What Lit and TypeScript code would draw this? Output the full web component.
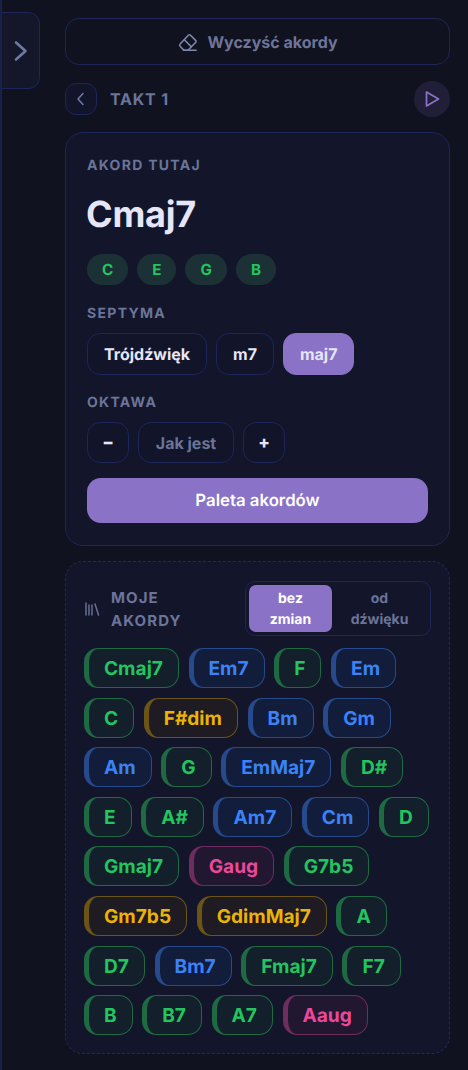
import { LitElement, html, css } from "lit";
import { customElement } from "lit/decorators.js";

type Kind = "g" | "b" | "y" | "p";
const rows: [string, Kind][] = [
  ["Cmaj7","g"],["Em7","b"],["F","g"],["Em","b"],
  ["C","g"],["F#dim","y"],["Bm","b"],["Gm","b"],
  ["Am","b"],["G","g"],["EmMaj7","b"],["D#","g"],
  ["E","g"],["A#","g"],["Am7","b"],["Cm","b"],["D","g"],
  ["Gmaj7","g"],["Gaug","p"],["G7b5","g"],
  ["Gm7b5","y"],["GdimMaj7","y"],["A","g"],
  ["D7","g"],["Bm7","b"],["Fmaj7","g"],["F7","g"],
  ["B","g"],["B7","g"],["A7","g"],["Aaug","p"],
];

@customElement("app-root")
export class AppRoot extends LitElement {
  static styles = css`
    :host { display: block; width: 468px; height: 1070px; overflow: hidden; background: #10121f; color: #e6e6f8;
      font-family: Inter, "Liberation Sans", sans-serif; border-left: 2px solid #1a1f48; box-sizing: border-box; text-rendering: geometricPrecision; }
    .layout { display: flex; align-items: flex-start; }
    .rail { width: 38px; height: 77px; margin-top: 12px; flex: none; box-sizing: border-box; background: #141729;
      border: 1px solid #1e2558; border-left: none; border-radius: 0 12px 12px 0; display: flex; align-items: center; justify-content: center; color: #6f7aa3; }
    .main { margin-left: 25px; width: 385px; padding-top: 18px; display: flex; flex-direction: column; }
    .clear { height: 47px; box-sizing: border-box; border: 1px solid #1e2558; border-radius: 14px; display: flex; align-items: center; justify-content: center; gap: 8px;
      color: #6f7599; font-size: 16px; font-weight: 700; }
    .clear svg { color: #7d86ac; }
    .takt { display: flex; align-items: center; height: 36px; margin-top: 16px; }
    .back { width: 32px; height: 32px; box-sizing: border-box; border: 1px solid #1e2558; border-radius: 11px; display: flex; align-items: center; justify-content: center; color: #6f7aa3; background: #12152a; }
    .takt-label { margin-left: 13px; font-size: 16px; font-weight: 700; letter-spacing: 0.8px; color: #6b7499; flex: 1; }
    .play { width: 36px; height: 36px; border-radius: 50%; background: #211f38; display: flex; align-items: center; justify-content: center; color: #8b72c8; }
    .card { margin-top: 15px; height: 414px; box-sizing: border-box; background: #13152a; border: 1px solid #1e2558; border-radius: 18px; padding: 24px 21px 0; display: flex; flex-direction: column; }
    .label { font-size: 14px; font-weight: 700; letter-spacing: 1.3px; color: #6b7499; line-height: 17px; }
    .name { font-size: 36px; font-weight: 700; line-height: 44px; margin: 18px 0 0 -1px; letter-spacing: -0.2px; }
    .notes { display: flex; gap: 9px; margin-top: 18px; }
    .note { height: 31px; padding: 0 15px; border-radius: 16px; background: #1c3136; color: #22c55e; font-size: 15.2px; font-weight: 700; display: flex; align-items: center; }
    .sep { margin-top: 20px; }
    .btns { display: flex; gap: 9px; margin-top: 11px; }
    .btn { height: 42px; box-sizing: border-box; padding: 0 16px; border: 1px solid #1e2558; border-radius: 13px; font-size: 16px; font-weight: 700; display: flex; align-items: center; justify-content: center; background: #12142a; }
    .btn.on { background: #8a72c6; border-color: #8a72c6; }
    .btn.sq { width: 42px; height: 41px; padding: 0; font-size: 17px; font-weight: 800; }
    .btn.mute { width: 96px; height: 41px; padding: 0; color: #6b7499; }
    .okt { margin-top: 19px; }
    .palette { height: 45px; margin-top: 15px; border-radius: 14px; background: #8a72c6; color: #fff; font-size: 16.8px; font-weight: 600; display: flex; align-items: center; justify-content: center; }
    .mine { margin-top: 15px; height: 493px; box-sizing: border-box; background: #13152a; border: 1px dashed #232856; border-radius: 18px; padding: 19px 18px 0; }
    .head { display: flex; align-items: center; height: 55px; }
    .head svg { flex: none; color: #6b7499; }
    .head-label { margin-left: 11px; font-size: 15px; font-weight: 700; letter-spacing: 1.1px; color: #6b7499; line-height: 23px; flex: 1; }
    .seg { width: 186px; height: 55px; box-sizing: border-box; border: 1px solid #1e2558; border-radius: 10px; padding: 3px; display: flex; }
    .seg div { flex: 1; display: flex; align-items: center; justify-content: center; text-align: center; font-size: 14px; font-weight: 700; line-height: 21px; color: #6b7499; border-radius: 7px; }
    .seg .on { background: #8a72c6; color: #fff; flex: none; width: 83px; }
    .chips { display: flex; flex-wrap: wrap; gap: 9.6px; margin-top: 12px; width: 350px; }
    .chip { height: 40px; box-sizing: border-box; padding: 0 15px; border: 1px solid; border-left-width: 5px; border-radius: 14px; font-size: 19.1px; font-weight: 700; display: flex; align-items: center; }
    .g { color: #22c55e; border-color: #1e6a42; background: #131f2b; }
    .b { color: #3b82f6; border-color: #264a8b; background: #121d3b; }
    .y { color: #eab308; border-color: #6a5416; background: #1e1b23; }
    .p { color: #ec4899; border-color: #6f2c5f; background: #211731; }
  `;

  render() {
    return html`<div class="layout">
      <div class="rail"><svg width="18" height="24" viewBox="0 0 18 24" fill="none" stroke="currentColor" stroke-width="2.6" stroke-linecap="round" stroke-linejoin="round"><path d="M4 3.5l9.5 8.5L4 20.5"/></svg></div>
      <div class="main">
        <div class="clear">
          <svg width="22" height="22" viewBox="0 0 24 24" fill="none" stroke="currentColor" stroke-width="1.7" stroke-linecap="round" stroke-linejoin="round">
            <path d="M7 21h14"/><path d="M3.4 14.2l9-9.6a1.6 1.6 0 0 1 2.3 0l5.6 5.6a1.6 1.6 0 0 1 0 2.3L12 21H7.5l-4.1-4.4a1.7 1.7 0 0 1 0-2.4z"/><path d="M8 9.5l7.5 7.5"/>
          </svg>
          <span>Wyczyść akordy</span>
        </div>
        <div class="takt">
          <div class="back"><svg width="16" height="16" viewBox="0 0 16 16" fill="none" stroke="currentColor" stroke-width="1.5" stroke-linecap="round" stroke-linejoin="round"><path d="M10 2.5L5 8l5 5.5"/></svg></div>
          <div class="takt-label">TAKT 1</div>
          <div class="play"><svg width="18" height="18" viewBox="0 0 18 18" fill="none" stroke="currentColor" stroke-width="1.7" stroke-linejoin="round"><path d="M3.5 2v14l12-7z"/></svg></div>
        </div>
        <div class="card">
          <div class="label">AKORD TUTAJ</div>
          <div class="name">Cmaj7</div>
          <div class="notes">${["C","E","G","B"].map(n => html`<div class="note">${n}</div>`)}</div>
          <div class="label sep">SEPTYMA</div>
          <div class="btns"><div class="btn">Trójdźwięk</div><div class="btn">m7</div><div class="btn on">maj7</div></div>
          <div class="label okt">OKTAWA</div>
          <div class="btns"><div class="btn sq">−</div><div class="btn mute">Jak jest</div><div class="btn sq">+</div></div>
          <div class="palette">Paleta akordów</div>
        </div>
        <div class="mine">
          <div class="head">
            <svg width="16" height="16" viewBox="0 0 16 16" fill="none" stroke="currentColor" stroke-width="1.4" stroke-linecap="round"><path d="M2 2v12M5 4v10M8 4v10M11 3l3.5 11"/></svg>
            <div class="head-label">MOJE<br>AKORDY</div>
            <div class="seg"><div class="on">bez<br>zmian</div><div>od<br>dźwięku</div></div>
          </div>
          <div class="chips">${rows.map(([t,k]) => html`<div class="chip ${k}">${t}</div>`)}</div>
        </div>
      </div>
    </div>`;
  }
}
